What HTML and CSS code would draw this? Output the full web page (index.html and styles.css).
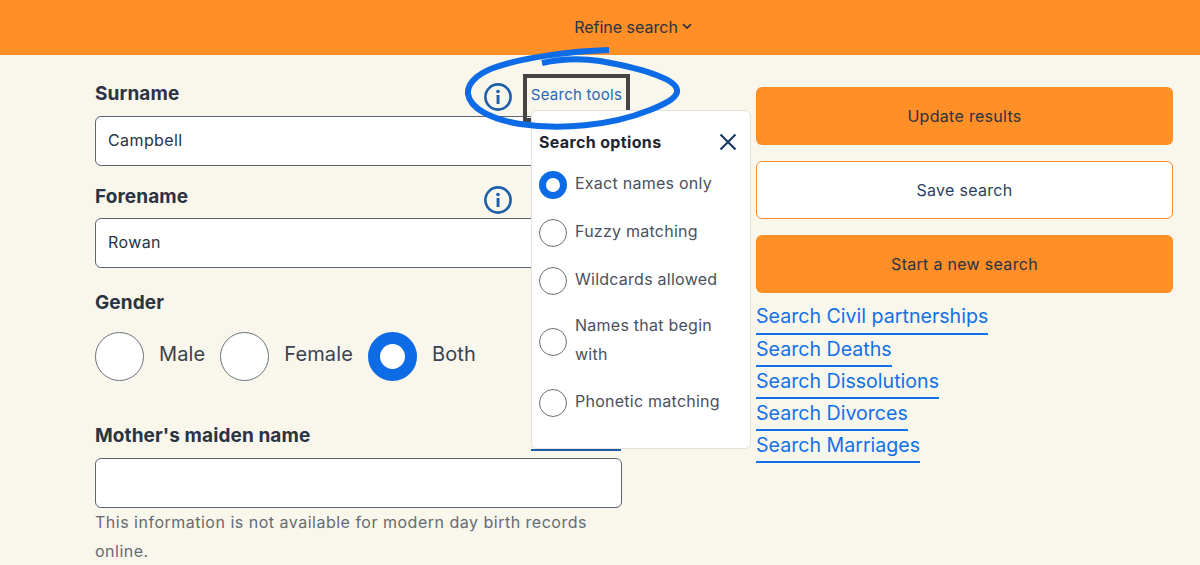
FILE: index.html
```html
<!DOCTYPE html>
<html lang="en">
<head>
<meta charset="utf-8">
<title>Refine search</title>
<link rel="stylesheet" href="styles.css">
</head>
<body>
<header class="topbar">
  <span>Refine search</span>
  <svg class="chev" width="10" height="7" viewBox="0 0 10 7"><path d="M1 1.2 5 5 9 1.2" fill="none" stroke="#2a3342" stroke-width="1.7"/></svg>
</header>
<main class="layout">
  <section class="form">
    <div class="label-row first">
      <label class="label">Surname</label>
      <div class="tools">
        <svg class="info" viewBox="0 0 28 28"><circle cx="14" cy="14" r="12.6" fill="none" stroke="#1c5fa8" stroke-width="2.6"/><rect x="12.6" y="12" width="2.9" height="9" fill="#1c5fa8"/><circle cx="14" cy="8.5" r="1.8" fill="#1c5fa8"/></svg>
        <a class="tools-link">Search tools</a>
      </div>
    </div>
    <input class="field" value="Campbell">
    <div class="label-row second">
      <label class="label">Forename</label>
      <div class="tools">
        <svg class="info" viewBox="0 0 28 28"><circle cx="14" cy="14" r="12.6" fill="none" stroke="#1c5fa8" stroke-width="2.6"/><rect x="12.6" y="12" width="2.9" height="9" fill="#1c5fa8"/><circle cx="14" cy="8.5" r="1.8" fill="#1c5fa8"/></svg>
      </div>
    </div>
    <input class="field" value="Rowan">
    <div class="label gender-label">Gender</div>
    <div class="genders">
      <span class="radio big"></span><span class="g-text">Male</span>
      <span class="radio big"></span><span class="g-text">Female</span>
      <span class="radio big on"></span><span class="g-text">Both</span>
    </div>
    <label class="label maiden">Mother's maiden name</label>
    <input class="field">
    <p class="hint">This information is not available for modern day birth records online.</p>
  </section>
  <aside class="side">
    <button class="btn solid">Update results</button>
    <button class="btn ghost">Save search</button>
    <button class="btn solid">Start a new search</button>
    <nav class="links">
      <a>Search Civil partnerships</a>
      <a>Search Deaths</a>
      <a>Search Dissolutions</a>
      <a>Search Divorces</a>
      <a>Search Marriages</a>
    </nav>
  </aside>
</main>
<div class="under-line"></div>
<div class="popup">
  <div class="pop-head">
    <strong>Search options</strong>
    <svg width="20" height="20" viewBox="0 0 20 20"><path d="M2.5 2.5 17.5 17.5M17.5 2.5 2.5 17.5" stroke="#1c3a66" stroke-width="2.2" fill="none"/></svg>
  </div>
  <div class="opt o1"><span class="radio small on"></span><span class="opt-text">Exact names only</span></div>
  <div class="opt"><span class="radio small"></span><span class="opt-text">Fuzzy matching</span></div>
  <div class="opt"><span class="radio small"></span><span class="opt-text">Wildcards allowed</span></div>
  <div class="opt two"><span class="radio small"></span><span class="opt-text">Names that begin with</span></div>
  <div class="opt"><span class="radio small"></span><span class="opt-text">Phonetic matching</span></div>
</div>
<svg class="scribble" width="230" height="90" viewBox="460 46 230 90">
  <path d="M609 50C570 51 520 58 493 68 475 75 467 85 468 94 470 108 490 119 520 124 560 130 610 126 650 110 670 102 678 96 677 90 676 80 650 70 600 61 580 58 560 59 542 63" fill="none" stroke="#0d6be6" stroke-width="6"/>
</svg>
</body>
</html>
```
FILE: styles.css
```css
* { box-sizing: border-box; }
html, body { margin: 0; height: 565px; overflow: hidden; }
body {
  background: #f9f6ec;
  font-family: "Inter", "Noto Sans", sans-serif;
  color: #2a3342;
  position: relative;
}
.topbar {
  height: 55px;
  background: #ff8f26;
  display: flex;
  align-items: center;
  justify-content: center;
  gap: 4px;
  font-size: 16px;
  padding-left: 66px;
  padding-bottom: 1px;
}
.chev { margin-top: -2px; }
.layout {
  display: flex;
  padding: 0 27px 0 95px;
  gap: 134px;
}
.form { width: 527px; flex: none; }
.side { width: 417px; flex: none; padding-top: 32px; }
.label { font-weight: 700; font-size: 19px; line-height: 24px; display: block; letter-spacing: 0.1px; }
.label-row { display: flex; justify-content: space-between; align-items: flex-start; }
.label-row.first { height: 61px; padding-top: 27px; }
.label-row.second { height: 52px; padding-top: 19px; }
.tools { display: flex; align-items: flex-start; width: 138px; gap: 11px; }
.first .tools { margin-top: -8px; }
.first .info { margin-top: 9px; }
.second .info { margin-top: 1px; }
.info { width: 28px; height: 28px; flex: none; }
.tools-link {
  width: 107px; height: 48px; flex: none;
  border: 4px solid #444;
  color: #2668b8; font-size: 15px; line-height: 31px; padding-top: 1px; text-align: center; white-space: nowrap;
  letter-spacing: 0.25px;
}
.field {
  display: block; width: 100%; height: 50px;
  border: 1px solid #5d6472; border-radius: 6px; background: #fff;
  padding: 0 12px 2px; font: 400 16px "Inter", sans-serif; letter-spacing: 0.4px; color: #2a3342;
}
.gender-label { margin-top: 23px; }
.genders { display: flex; align-items: center; margin-top: 17px; height: 49px; }
.g-text { font-size: 20px; letter-spacing: 0.12px; margin-left: 15px; margin-right: 15px; padding-bottom: 5px; color: #3b4350; }
.radio { display: inline-block; border-radius: 50%; background: #fff; border: 1px solid #6b7078; flex: none; }
.radio.big { width: 49px; height: 49px; }
.radio.small { width: 28px; height: 28px; }
.radio.big.on { border: 12px solid #0d6be6; }
.radio.small.on { border: 7px solid #0d6be6; }
.maiden { margin-top: 43px; margin-bottom: 10px; }
.hint { margin: 0; font-size: 16px; line-height: 29px; letter-spacing: 0.5px; color: #666b73; }
.btn {
  display: block; width: 100%; height: 58px; border-radius: 6px;
  font: 400 16px "Inter", sans-serif; letter-spacing: 0.3px; color: #2a3342; margin-bottom: 16px;
}
.btn.solid { background: #ff8f26; border: 0; }
.btn.ghost { background: #fff; border: 1px solid #ff8f26; color: #2a3f5f; }
.btn:last-of-type { margin-bottom: 9px; }
.links { display: flex; flex-direction: column; align-items: flex-start; }
.links a {
  color: #1270e8; font-size: 19.6px; line-height: 29px; height: 32px;
  border-bottom: 2px solid #1270e8; white-space: nowrap;
}
.links a:first-child { height: 33px; }
.under-line { position: absolute; left: 531px; top: 449px; width: 90px; height: 2px; background: #1c5fa8; }
.popup {
  position: absolute; left: 531px; top: 110px; width: 220px; height: 339px;
  background: #fff; border: 1px solid #e4e2da; border-radius: 6px;
  padding: 0 8px 0 7px; font-size: 16px; letter-spacing: 0.25px; color: #4a505c;
}
.pop-head { display: flex; justify-content: space-between; align-items: center; height: 62px; padding-right: 4px; }
.pop-head strong { color: #1e2530; font-size: 16px; font-weight: 700; letter-spacing: 0.35px; }
.opt { display: flex; align-items: center; gap: 8px; height: 48px; line-height: 29px; }
.opt-text { padding-bottom: 4px; }
.o1 { margin-top: -12px; }
.opt.two { height: 74px; padding-right: 20px; }
.scribble { position: absolute; left: 460px; top: 46px; }
```
